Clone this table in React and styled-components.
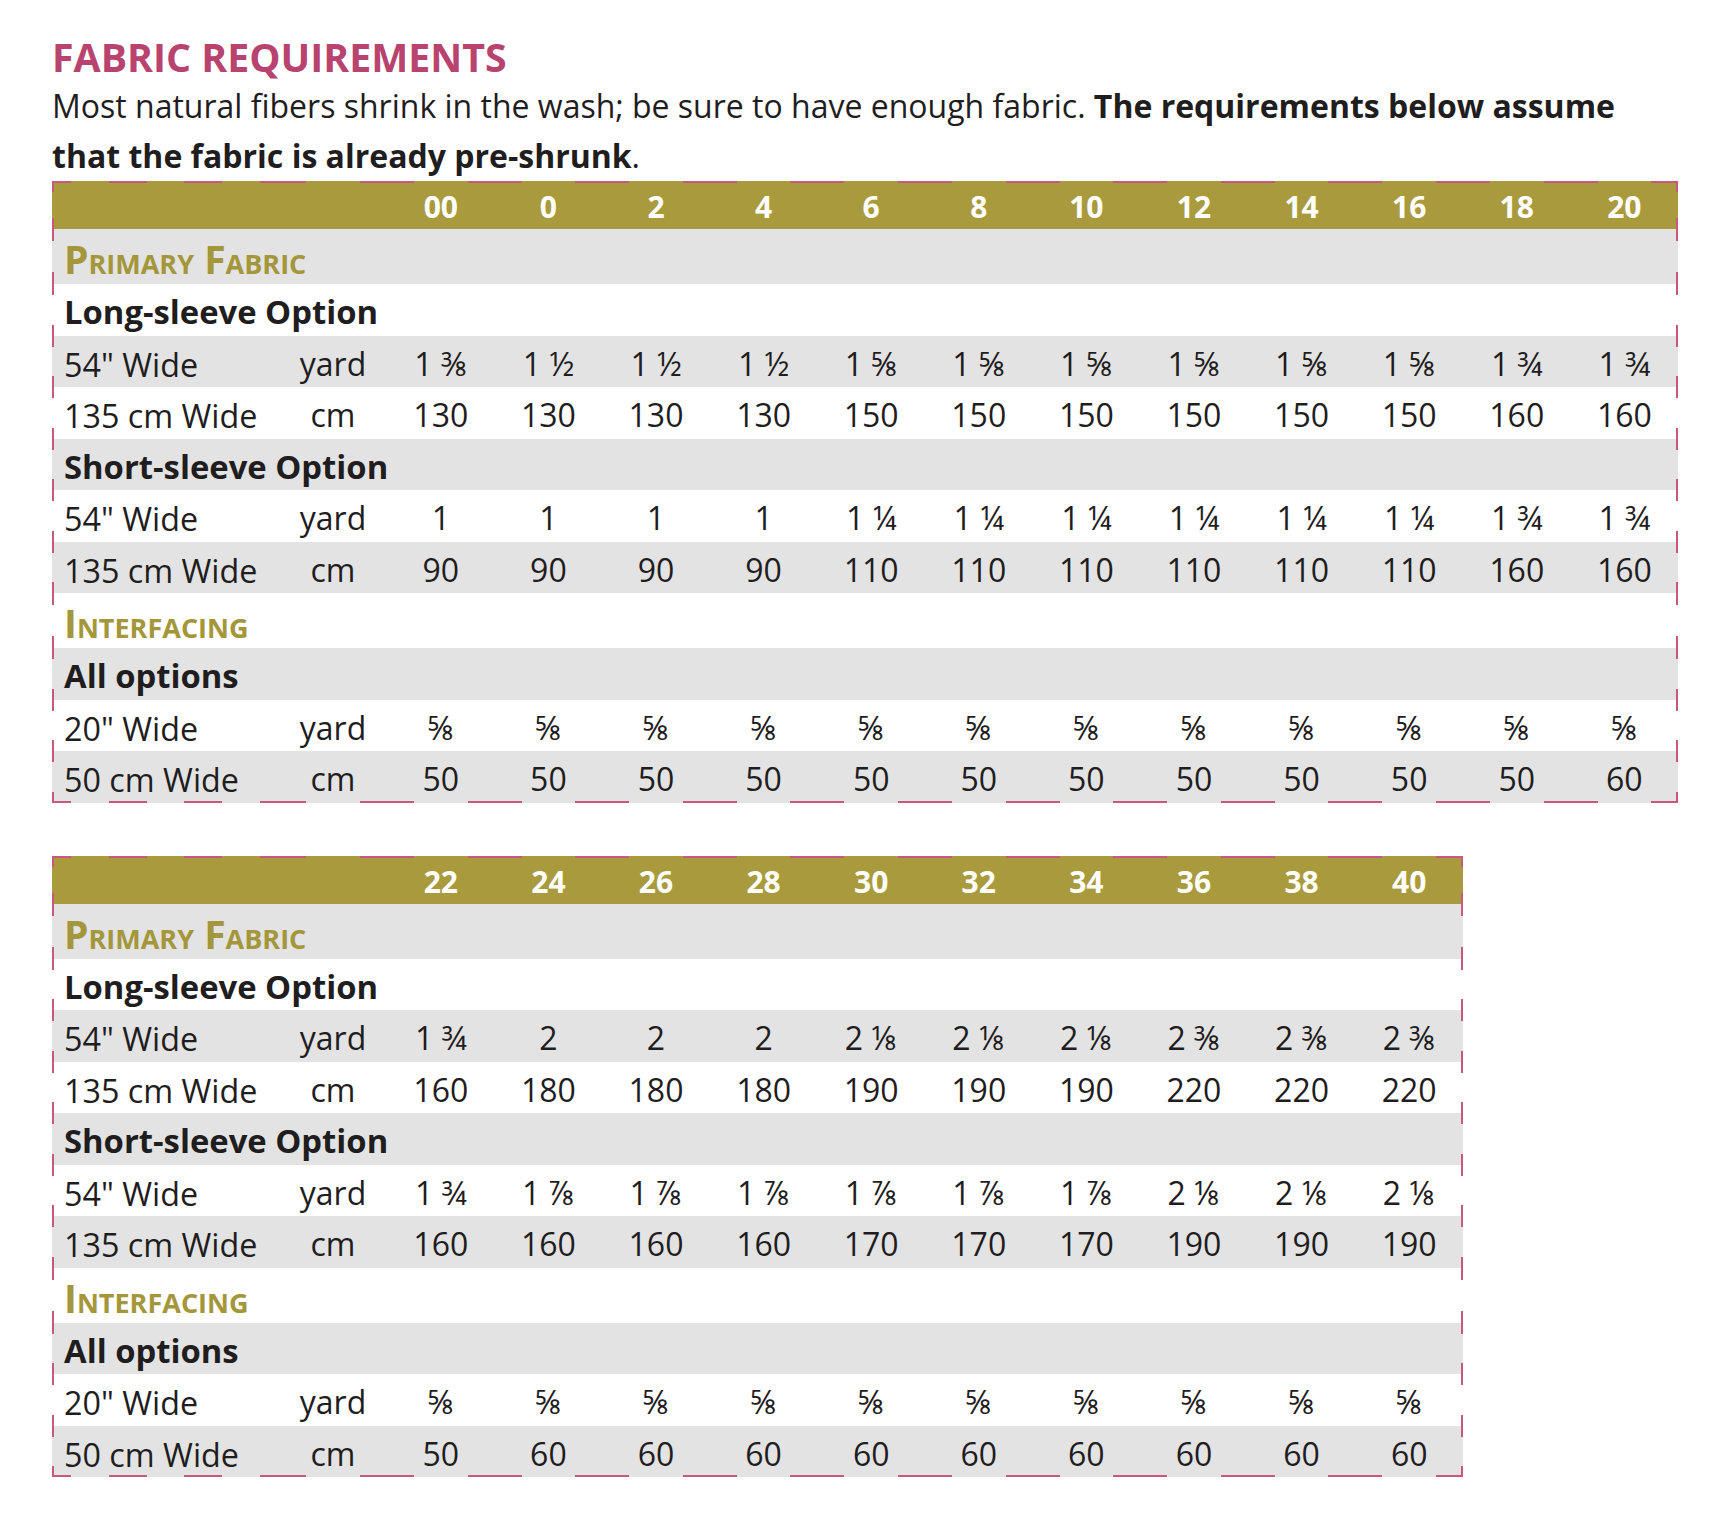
import React from "react";
import styled, { createGlobalStyle, css } from "styled-components";

const PINK = "#c8587f";
const OLIVE = "#a99b3d";
const GRAY = "#e3e3e3";
const INK = "#1f1d1e";

const GlobalStyle = createGlobalStyle`
  body {
    margin: 0;
    background: #ffffff;
    font-family: "Open Sans", "Noto Sans", sans-serif;
    color: ${INK};
  }
`;

const Page = styled.div`
  padding: 34px 0 80px 52px;
`;

const Title = styled.h1`
  margin: 0;
  font-size: 39.3px;
  line-height: 47px;
  font-weight: 700;
  color: #b8436f;
`;

const Intro = styled.p`
  margin: 0;
  font-size: 32px;
  line-height: 50px;

  strong {
    font-weight: 700;
  }
`;

const Tables = styled.div`
  display: flex;
  flex-direction: column;
  gap: 53px;
`;

const Table = styled.table`
  border-collapse: collapse;
  table-layout: fixed;
`;

// dashed edges: each cell draws its own piece, with a half dash at both ends
const edges = ({ $t, $b, $l, $r, $n = 1 }) => {
  const h = (25 / $n).toFixed(3);
  const g = (75 / $n).toFixed(3);
  const p = (100 / $n).toFixed(3);
  const across = `repeating-linear-gradient(to right, ${PINK} 0 ${h}%, transparent ${h}% ${g}%, ${PINK} ${g}% ${p}%)`;
  const down = `linear-gradient(to bottom, ${PINK} 0 22%, transparent 22% 78%, ${PINK} 78% 100%)`;
  const layers = [];
  if ($t) layers.push([across, "100% 2px", "left top"]);
  if ($b) layers.push([across, "100% 2px", "left bottom"]);
  if ($l) layers.push([down, "2px 100%", "left top"]);
  if ($r) layers.push([down, "2px 100%", "right top"]);
  if (!layers.length) return "";
  return css`
    background-image: ${layers.map((x) => x[0]).join(", ")};
    background-size: ${layers.map((x) => x[1]).join(", ")};
    background-position: ${layers.map((x) => x[2]).join(", ")};
    background-repeat: no-repeat;
  `;
};

const HeadCell = styled.th`
  box-sizing: border-box;
  height: 48px;
  padding: 3px 0 0;
  line-height: 45px;
  background-color: ${OLIVE};
  color: #ffffff;
  font-size: 30px;
  font-weight: 700;
  text-align: center;
  ${edges}
`;

const Row = styled.tr`
  background-color: ${(p) => (p.$gray ? GRAY : "#ffffff")};
`;

const SectionCell = styled.td`
  box-sizing: border-box;
  height: 55px;
  padding: 4px 0 0 12px;
  line-height: 51px;
  font-size: 39px;
  font-weight: 700;
  font-variant: small-caps;
  color: #a4963a;
  ${edges}
`;

const GroupCell = styled.td`
  box-sizing: border-box;
  height: 51.5px;
  padding: 5px 0 0 12px;
  line-height: 46.5px;
  font-size: 32.8px;
  font-weight: 700;
  ${edges}
`;

const Cell = styled.td`
  box-sizing: border-box;
  height: 51.5px;
  padding: 5px 0 0 ${(p) => (p.$label ? "12px" : "0")};
  line-height: 46.5px;
  font-size: ${(p) => (p.$label ? "32.3px" : "32px")};
  text-align: ${(p) => (p.$label ? "left" : "center")};
  white-space: nowrap;
  ${edges}
`;

const LABEL_W = 227;
const UNIT_W = 108;
const SIZE_W = 107.6;

const rep = (v, n) => Array(n).fill(v);

const tableOne = {
  sizes: ["00", "0", "2", "4", "6", "8", "10", "12", "14", "16", "18", "20"],
  long: [
    ["1 ⅜", ...rep("1 ½", 3), ...rep("1 ⅝", 6), "1 ¾", "1 ¾"],
    [...rep("130", 4), ...rep("150", 6), "160", "160"],
  ],
  short: [
    [...rep("1", 4), ...rep("1 ¼", 6), "1 ¾", "1 ¾"],
    [...rep("90", 4), ...rep("110", 6), "160", "160"],
  ],
  interfacing: [rep("⅝", 12), [...rep("50", 11), "60"]],
};

const tableTwo = {
  sizes: ["22", "24", "26", "28", "30", "32", "34", "36", "38", "40"],
  long: [
    ["1 ¾", "2", "2", "2", "2 ⅛", "2 ⅛", "2 ⅛", "2 ⅜", "2 ⅜", "2 ⅜"],
    ["160", "180", "180", "180", "190", "190", "190", "220", "220", "220"],
  ],
  short: [
    ["1 ¾", ...rep("1 ⅞", 6), "2 ⅛", "2 ⅛", "2 ⅛"],
    [...rep("160", 4), ...rep("170", 3), ...rep("190", 3)],
  ],
  interfacing: [rep("⅝", 10), ["50", ...rep("60", 9)]],
};

const buildRows = (t) => [
  { kind: "section", text: "Primary Fabric" },
  { kind: "group", text: "Long-sleeve Option" },
  { kind: "data", label: '54" Wide', unit: "yard", values: t.long[0] },
  { kind: "data", label: "135 cm Wide", unit: "cm", values: t.long[1] },
  { kind: "group", text: "Short-sleeve Option" },
  { kind: "data", label: '54" Wide', unit: "yard", values: t.short[0] },
  { kind: "data", label: "135 cm Wide", unit: "cm", values: t.short[1] },
  { kind: "section", text: "Interfacing" },
  { kind: "group", text: "All options" },
  { kind: "data", label: '20" Wide', unit: "yard", values: t.interfacing[0] },
  { kind: "data", label: "50 cm Wide", unit: "cm", values: t.interfacing[1] },
];

const SizeTable = ({ data }) => {
  const count = data.sizes.length;
  const rows = buildRows(data);
  const span = count + 2;
  const last = rows.length - 1;

  return (
    <Table style={{ width: LABEL_W + UNIT_W + SIZE_W * count }}>
      <colgroup>
        <col style={{ width: LABEL_W }} />
        <col style={{ width: UNIT_W }} />
        {data.sizes.map((s) => (
          <col key={s} style={{ width: SIZE_W }} />
        ))}
      </colgroup>
      <thead>
        <tr>
          <HeadCell $t $l $n={3} />
          <HeadCell $t />
          {data.sizes.map((s, i) => (
            <HeadCell key={s} $t $r={i === count - 1}>
              {s}
            </HeadCell>
          ))}
        </tr>
      </thead>
      <tbody>
        {rows.map((row, i) => {
          const gray = i % 2 === 0;
          if (row.kind === "section") {
            return (
              <Row key={i} $gray={gray}>
                <SectionCell colSpan={span} $l $r>
                  {row.text}
                </SectionCell>
              </Row>
            );
          }
          if (row.kind === "group") {
            return (
              <Row key={i} $gray={gray}>
                <GroupCell colSpan={span} $l $r>
                  {row.text}
                </GroupCell>
              </Row>
            );
          }
          const isLast = i === last;
          return (
            <Row key={i} $gray={gray}>
              <Cell $label $l $b={isLast} $n={3}>
                {row.label}
              </Cell>
              <Cell $b={isLast}>{row.unit}</Cell>
              {row.values.map((v, j) => (
                <Cell key={j} $b={isLast} $r={j === count - 1}>
                  {v}
                </Cell>
              ))}
            </Row>
          );
        })}
      </tbody>
    </Table>
  );
};

const App = () => (
  <Page>
    <GlobalStyle />
    <Title>FABRIC REQUIREMENTS</Title>
    <Intro>
      Most natural fibers shrink in the wash; be sure to have enough fabric.{" "}
      <strong>The requirements below assume</strong>
      <br />
      <strong>that the fabric is already pre-shrunk</strong>.
    </Intro>
    <Tables>
      <SizeTable data={tableOne} />
      <SizeTable data={tableTwo} />
    </Tables>
  </Page>
);

export default App;
